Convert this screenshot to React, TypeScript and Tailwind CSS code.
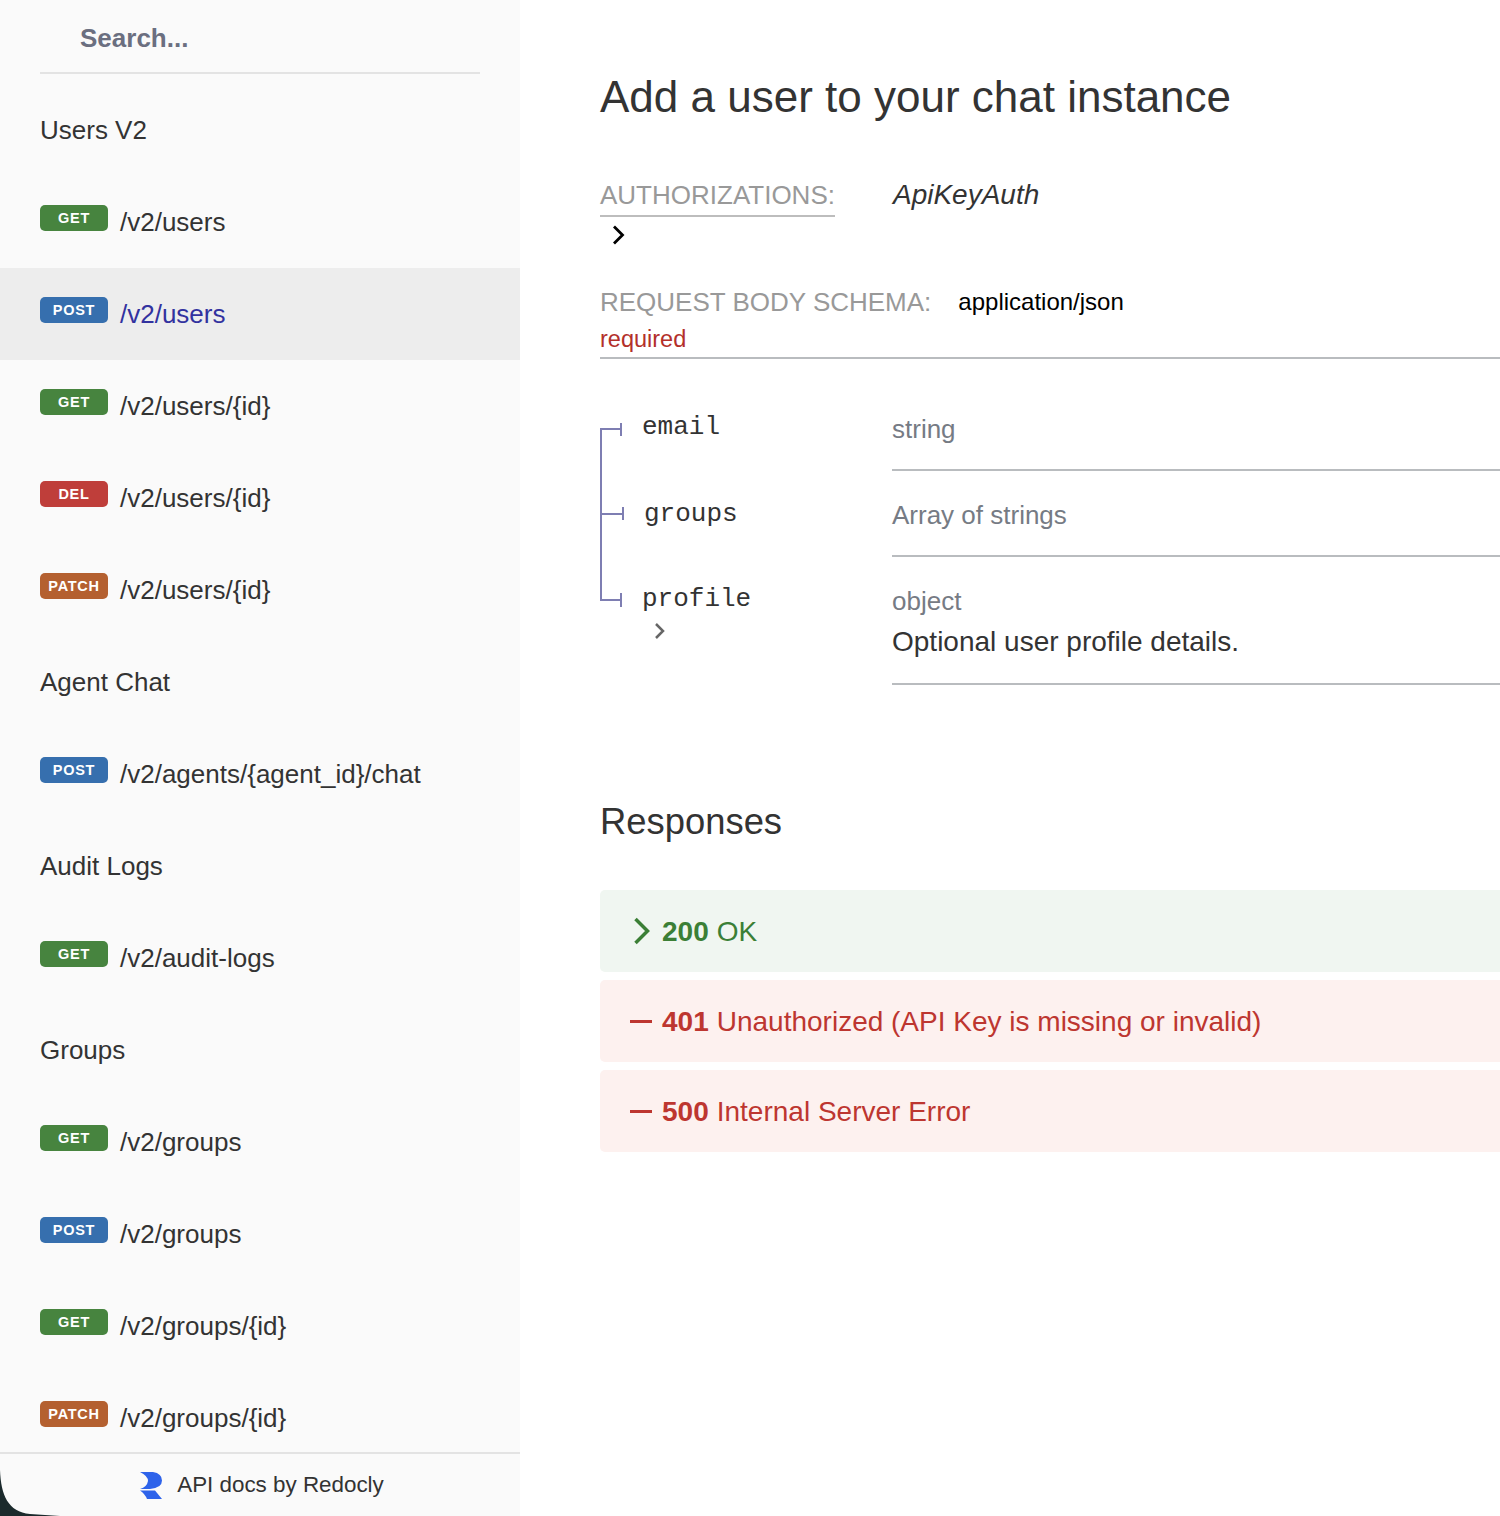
type Method = "GET" | "POST" | "DEL" | "PATCH";

const badgeColors: Record<Method, string> = {
  GET: "bg-[#47843f]",
  POST: "bg-[#366fae]",
  DEL: "bg-[#bf3e3a]",
  PATCH: "bg-[#b46030]",
};

const nav: Array<{ heading: string } | { method: Method; path: string; active?: boolean }> = [
  { heading: "Users V2" },
  { method: "GET", path: "/v2/users" },
  { method: "POST", path: "/v2/users", active: true },
  { method: "GET", path: "/v2/users/{id}" },
  { method: "DEL", path: "/v2/users/{id}" },
  { method: "PATCH", path: "/v2/users/{id}" },
  { heading: "Agent Chat" },
  { method: "POST", path: "/v2/agents/{agent_id}/chat" },
  { heading: "Audit Logs" },
  { method: "GET", path: "/v2/audit-logs" },
  { heading: "Groups" },
  { method: "GET", path: "/v2/groups" },
  { method: "POST", path: "/v2/groups" },
  { method: "GET", path: "/v2/groups/{id}" },
  { method: "PATCH", path: "/v2/groups/{id}" },
];

const Sidebar = () => (
  <aside className="relative flex h-[1516px] w-[520px] flex-none flex-col bg-[#fafafa] text-[26px] text-[#333]">
    <div className="mx-10 flex h-[74px] flex-none items-center border-b-2 border-[#e3e3e3] pl-10">
      <span className="mt-[4px] text-[26px] font-bold text-[#6b6f80]">Search...</span>
    </div>
    <div className="mt-[10px] min-h-0 flex-1 overflow-hidden">
      {nav.map((item, i) =>
        "heading" in item ? (
          <div key={i} className="flex h-[92px] items-center pl-10">
            {item.heading}
          </div>
        ) : (
          <div
            key={i}
            className={`flex h-[92px] items-center pl-10 ${item.active ? "bg-[#ededed] text-[#32329f]" : ""}`}
          >
            <span
              className={`-mt-[8px] flex h-[26px] w-[68px] items-center justify-center rounded-[5px] pt-[2px] text-[14.5px] font-bold tracking-[0.7px] text-white ${badgeColors[item.method]}`}
            >
              {item.method}
            </span>
            <span className="ml-3">{item.path}</span>
          </div>
        ),
      )}
    </div>
    <div className="flex h-[64px] flex-none items-center justify-center gap-[15px] border-t-2 border-[#e3e3e3] bg-[#fafafa] pl-[4px] text-[22.4px] text-[#333]">
      <svg width="22" height="27" viewBox="0 0 22 27" fill="#2e63ea">
        <path d="M0 0H13Q22 1.5 22 8.5Q22 16 10 17H0Q7 15 8 9Q8 4 0 0z" />
        <path d="M0 18.5H15L22 27H7Q5 22 0 18.5z" />
      </svg>
      API docs by Redocly
    </div>
    <svg className="absolute bottom-0 left-0" width="60" height="46" viewBox="0 0 60 46">
      <path d="M0 0C1 25 8 42 30 44L60 46H0z" fill="#1b2a2c" />
    </svg>
  </aside>
);

const Response = ({
  code,
  text,
  ok,
}: {
  code: string;
  text: string;
  ok?: boolean;
}) => (
  <div
    className={`flex h-[82px] items-center rounded-l-[5px] pl-[30px] text-[28px] ${
      ok ? "bg-[#f0f6f1] text-[#3b7f36]" : "bg-[#fdf1ef] text-[#bd3630]"
    }`}
  >
    {ok ? (
      <svg width="22" height="28" viewBox="0 0 22 28" fill="none" stroke="currentColor" strokeWidth="3.5" className="mr-[10px]">
        <path d="M5.5 2l12 12-12 12" />
      </svg>
    ) : (
      <span className="mr-[10px] h-[3px] w-[22px] bg-current" />
    )}
    <span className="pt-[2px] font-bold">{code}</span>
    <span className="ml-[8px] pt-[2px]">{text}</span>
  </div>
);

export default function App() {
  return (
    <div className="flex h-[1516px] w-[1500px] overflow-hidden bg-white font-['Liberation_Sans',sans-serif]">
      <Sidebar />
      <main className="min-w-0 flex-1 pl-20 text-[#333]">
        <h1 className="mt-[67px] text-[44px] leading-[60px]">Add a user to your chat instance</h1>

        <div className="mt-[38px] flex items-start">
          <div>
            <div className="h-[52px] w-fit border-b-2 border-[#bdbdbd] pt-[15px] text-[26px] leading-[31px] text-[#999]">AUTHORIZATIONS:</div>
            <svg width="14" height="20" viewBox="0 0 14 20" fill="none" stroke="#000" strokeWidth="2.8" className="ml-[11px] mt-[8px]">
              <path d="M3 1.5l8.5 8.5L3 18.5" />
            </svg>
          </div>
          <i className="ml-[58px] pt-[14px] text-[28px] leading-[31px]">ApiKeyAuth</i>
        </div>

        <div className="mt-[39px] flex items-center">
          <span className="text-[26px] leading-[31px] text-[#999]">REQUEST BODY SCHEMA:</span>
          <span className="ml-[27px] text-[24px] text-black">application/json</span>
        </div>
        <div className="mt-[4px] h-[35px] border-b-2 border-[#b9bcbf] text-[23.5px] leading-[30px] text-[#b3302a]">required</div>

        <div className="relative mt-[28px]">
          <svg className="absolute -top-px left-0" width="30" height="230" viewBox="600 386 30 230" fill="none" stroke="#7e7eb2" strokeWidth="2">
            <path d="M601 429V600M600 429H621M600 514H623M600 600H621M621 423V436M623 507V520M621 593V607" />
          </svg>
          <div className="flex h-[84px]">
            <div className="w-[292px] flex-none pl-[42px] pt-[24px] font-['Liberation_Mono',monospace] text-[26px] leading-[32px]">email</div>
            <div className="flex-1 border-b-2 border-[#b9bcbf] pt-[26px] text-[26px] leading-[32px] text-[#767b84]">string</div>
          </div>
          <div className="flex h-[86px]">
            <div className="w-[292px] flex-none pl-[44px] pt-[27px] font-['Liberation_Mono',monospace] text-[26px] leading-[32px]">groups</div>
            <div className="flex-1 border-b-2 border-[#b9bcbf] pt-[28px] text-[26px] leading-[32px] text-[#767b84]">Array of strings</div>
          </div>
          <div className="flex h-[128px]">
            <div className="w-[292px] flex-none pl-[42px] pt-[26px] font-['Liberation_Mono',monospace] text-[26px] leading-[32px]">
              profile
              <svg width="12" height="18" viewBox="0 0 12 18" fill="none" stroke="#666" strokeWidth="2.5" className="ml-[12px] mt-[7px]">
                <path d="M2 2l7 7-7 7" />
              </svg>
            </div>
            <div className="flex-1 border-b-2 border-[#b9bcbf] pt-[28px] text-[26px] leading-[32px]">
              <div className="text-[#767b84]">object</div>
              <div className="mt-[9px] text-[28px]">Optional user profile details.</div>
            </div>
          </div>
        </div>

        <h2 className="mt-[111px] text-[36.4px] leading-[52px]">Responses</h2>
        <div className="mt-[42px] flex flex-col gap-2">
          <Response code="200" text="OK" ok />
          <Response code="401" text="Unauthorized (API Key is missing or invalid)" />
          <Response code="500" text="Internal Server Error" />
        </div>
      </main>
    </div>
  );
}
